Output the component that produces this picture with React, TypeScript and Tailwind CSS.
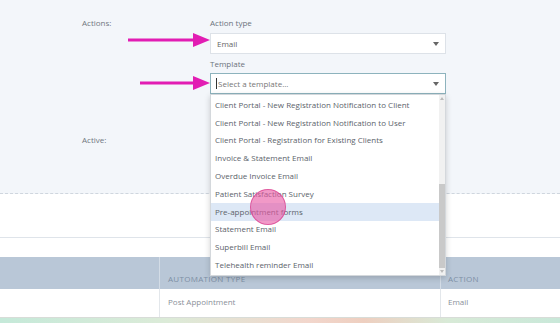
import React from 'react';

const TEMPLATES = [
    'Client Portal - New Registration Notification to Client',
    'Client Portal - New Registration Notification to User',
    'Client Portal - Registration for Existing Clients',
    'Invoice & Statement Email',
    'Overdue Invoice Email',
    'Patient Satisfaction Survey',
    'Pre-appointment forms',
    'Statement Email',
    'Superbill Email',
    'Telehealth reminder Email',
];

const Caret = () => (
    <svg width="6" height="4" viewBox="0 0 6 4" className="fill-[#666]">
        <path d="M0 0 L6 0 L3 4 Z" />
    </svg>
);

const Arrow = ({ width }: { width: number }) => (
    <svg width={width} height="16" viewBox={`0 0 ${width} 16`}>
        <line x1="0" y1="8" x2={width - 14} y2="8" stroke="#e21db3" strokeWidth="3" strokeLinecap="round" />
        <path d={`M${width - 17} 1 L${width} 8 L${width - 17} 15 Z`} fill="#e21db3" />
    </svg>
);

export default function App() {
    return (
        <div className="relative w-[560px] h-[324px] overflow-hidden bg-white text-[8px] text-[#707780] font-['Open_Sans',sans-serif]">
            {/* Form section */}
            <div className="h-[194px] bg-[#f3f6fa] border-b border-dashed border-[#cfd6de] pt-[17px]">
                <div className="flex">
                    <div className="w-[210px] pl-[82px] leading-[12px]">Actions:</div>
                    <div className="w-[236px]">
                        <div className="leading-[12px] text-[#6b737c]">Action type</div>
                        <div className="mt-[4px] h-[21px] bg-white border border-[#dde2e8] flex items-center justify-between pl-[6px] pr-[6px] text-[#666]">
                            <span>Email</span>
                            <Caret />
                        </div>
                        <div className="mt-[4px] leading-[12px] text-[#6b737c]">Template</div>
                        <div className="relative mt-[3px]">
                            <div className="h-[21px] bg-white border border-[#8db3bd] flex items-center justify-between pl-[5px] pr-[6px] text-[#777]">
                                <span className="flex items-center">
                                    <span className="w-px h-[11px] bg-[#333] mr-px" />
                                    Select a template...
                                </span>
                                <Caret />
                            </div>
                            <div className="absolute left-0 top-[21px] w-[236px] h-[182px] bg-white border border-[#d4d8dc] shadow-[0_2px_6px_rgba(0,0,0,0.18)] z-20 flex">
                                <div className="flex-1 pt-[1px]">
                                    {TEMPLATES.map((t) => (
                                        <div
                                            key={t}
                                            className={`h-[17.8px] flex items-center pl-[4px] text-[#5c636b] whitespace-nowrap ${t === 'Pre-appointment forms' ? 'bg-[#dde8f6]' : ''}`}
                                        >
                                            {t}
                                        </div>
                                    ))}
                                </div>
                                <div className="w-[6px] bg-[#f1f1f1] flex flex-col items-center justify-between py-[2px]">
                                    <svg width="4" height="3" viewBox="0 0 4 3" className="fill-[#bbb]"><path d="M0 3 L2 0 L4 3 Z" /></svg>
                                    <div className="flex-1 w-full flex flex-col justify-end py-[2px]">
                                        <div className="h-[84px] w-full bg-[#c9c9c9]" />
                                    </div>
                                    <svg width="4" height="3" viewBox="0 0 4 3" className="fill-[#bbb]"><path d="M0 0 L4 0 L2 3 Z" /></svg>
                                </div>
                            </div>
                        </div>
                    </div>
                </div>
                <div className="flex mt-[40px]">
                    <div className="w-[210px] pl-[82px] leading-[12px]">Active:</div>
                </div>
            </div>

            {/* Spacer area */}
            <div className="h-[44px] border-b border-[#dfe4ea]" />
            <div className="h-[19px]" />

            {/* Table */}
            <div className="h-[32px] bg-[#b9c7d7] flex text-[8px] tracking-[0.3px] text-[#7d8fa5]">
                <div className="w-[160px] border-r border-[#d3dce6]" />
                <div className="w-[281px] border-r border-[#d3dce6] flex items-end pl-[8px] pb-[4px]">AUTOMATION TYPE</div>
                <div className="flex-1 flex items-end pl-[7px] pb-[4px]">ACTION</div>
            </div>
            <div className="h-[28px] flex text-[#8a9099]">
                <div className="w-[160px] border-r border-[#e3e7eb]" />
                <div className="w-[281px] border-r border-[#e3e7eb] flex items-center pl-[8px] pb-[2px]">Post Appointment</div>
                <div className="flex-1 flex items-center pl-[7px] pb-[2px]">Email</div>
            </div>
            <div className="h-[6px] border-t border-[#d8dcd8] bg-[linear-gradient(90deg,#c5e9d9_0%,#dcebd8_30%,#f2d6cc_55%,#eecfc0_65%,#d8ead7_80%,#c9e8d9_100%)]" />

            {/* Annotations */}
            <div className="absolute left-[128px] top-[32px]">
                <Arrow width={82} />
            </div>
            <div className="absolute left-[140px] top-[75px]">
                <Arrow width={70} />
            </div>
            <div className="absolute left-[250px] top-[189px] w-[36px] h-[36px] rounded-full bg-[rgba(232,90,165,0.62)] border border-[rgba(215,60,140,0.7)] z-30" />
        </div>
    );
}
